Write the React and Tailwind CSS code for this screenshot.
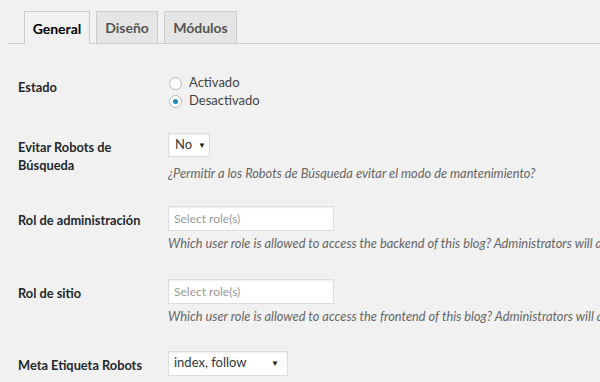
export default function App() {
  const font = { fontFamily: 'Lato, "Open Sans", sans-serif' };
  const label = "w-[150px] shrink-0 text-[12.8px] font-bold text-[#23282d]";
  const desc = "text-[12.8px] italic text-[#666] whitespace-nowrap";
  const box = "flex items-center border border-[#ddd] bg-white shadow-[inset_0_1px_2px_rgba(0,0,0,0.07)]";

  return (
    <div className="h-[382px] w-[600px] overflow-hidden bg-[#f1f1f1]" style={font}>
      {/* tabs */}
      <div className="ml-[8px] flex items-end gap-[6px] border-b border-[#ccc] pl-[16px] pt-[11px]">
        <div className="-mb-px flex h-[33px] w-[66px] items-center justify-center border border-b-0 border-[#ccc] bg-[#f1f1f1] text-[14px] font-bold text-black">
          General
        </div>
        <div className="flex h-[32px] w-[62px] items-center justify-center border border-b-0 border-[#ccc] bg-[#e5e5e5] text-[14px] font-bold text-[#555]">
          Diseño
        </div>
        <div className="flex h-[32px] w-[73px] items-center justify-center border border-b-0 border-[#ccc] bg-[#e5e5e5] text-[14px] font-bold text-[#555]">
          Módulos
        </div>
      </div>

      <div className="pl-[18px]">
        {/* Estado */}
        <div className="mt-[28px] flex">
          <div className={label + " pt-[6px]"}>Estado</div>
          <div className="mt-[2px] flex flex-col text-[13px] text-[#444]">
            <label className="flex h-[18px] items-center">
              <span className="ml-px mr-[7px] h-[13px] w-[13px] rounded-full border border-[#b4b9be] bg-white" />
              Activado
            </label>
            <label className="flex h-[18px] items-center">
              <span className="ml-px mr-[7px] flex h-[13px] w-[13px] items-center justify-center rounded-full border border-[#b4b9be] bg-white">
                <span className="h-[5px] w-[5px] rounded-full bg-[#1e8cbe]" />
              </span>
              Desactivado
            </label>
          </div>
        </div>

        {/* Evitar Robots */}
        <div className="mt-[23px] flex">
          <div className={label + " pt-[5px] leading-[18px]"}>
            Evitar Robots de
            <br />
            Búsqueda
          </div>
          <div>
            <div className={box + " h-[24px] w-[42px] pl-[6px] text-[13px] text-[#32373c]"}>
              No
              <span className="ml-[6px] text-[8px] text-[#222]">▼</span>
            </div>
            <div className={desc + " mt-[7px]"}>¿Permitir a los Robots de Búsqueda evitar el modo de mantenimiento?</div>
          </div>
        </div>

        {/* Rol de administración */}
        <div className="mt-[23px] flex">
          <div className={label + " pt-[5px]"}>Rol de administración</div>
          <div>
            <div className={box + " h-[25px] w-[166px] pl-[5px] text-[12px] text-[#999]"}>Select role(s)</div>
            <div className={desc + " mt-[3px]"}>
              Which user role is allowed to access the backend of this blog? Administrators will always have access.
            </div>
          </div>
        </div>

        {/* Rol de sitio */}
        <div className="mt-[26px] flex">
          <div className={label + " pt-[5px]"}>Rol de sitio</div>
          <div>
            <div className={box + " h-[25px] w-[166px] pl-[5px] text-[12px] text-[#999]"}>Select role(s)</div>
            <div className={desc + " mt-[3px]"}>
              Which user role is allowed to access the frontend of this blog? Administrators will always have access.
            </div>
          </div>
        </div>

        {/* Meta Etiqueta Robots */}
        <div className="mt-[24px] flex">
          <div className={label + " pt-[5px]"}>Meta Etiqueta Robots</div>
          <div className={box + " h-[25px] w-[120px] justify-between pl-[5px] pr-[8px] text-[13px] text-[#32373c]"}>
            index, follow
            <span className="text-[8px] text-[#222]">▼</span>
          </div>
        </div>
      </div>
    </div>
  );
}
